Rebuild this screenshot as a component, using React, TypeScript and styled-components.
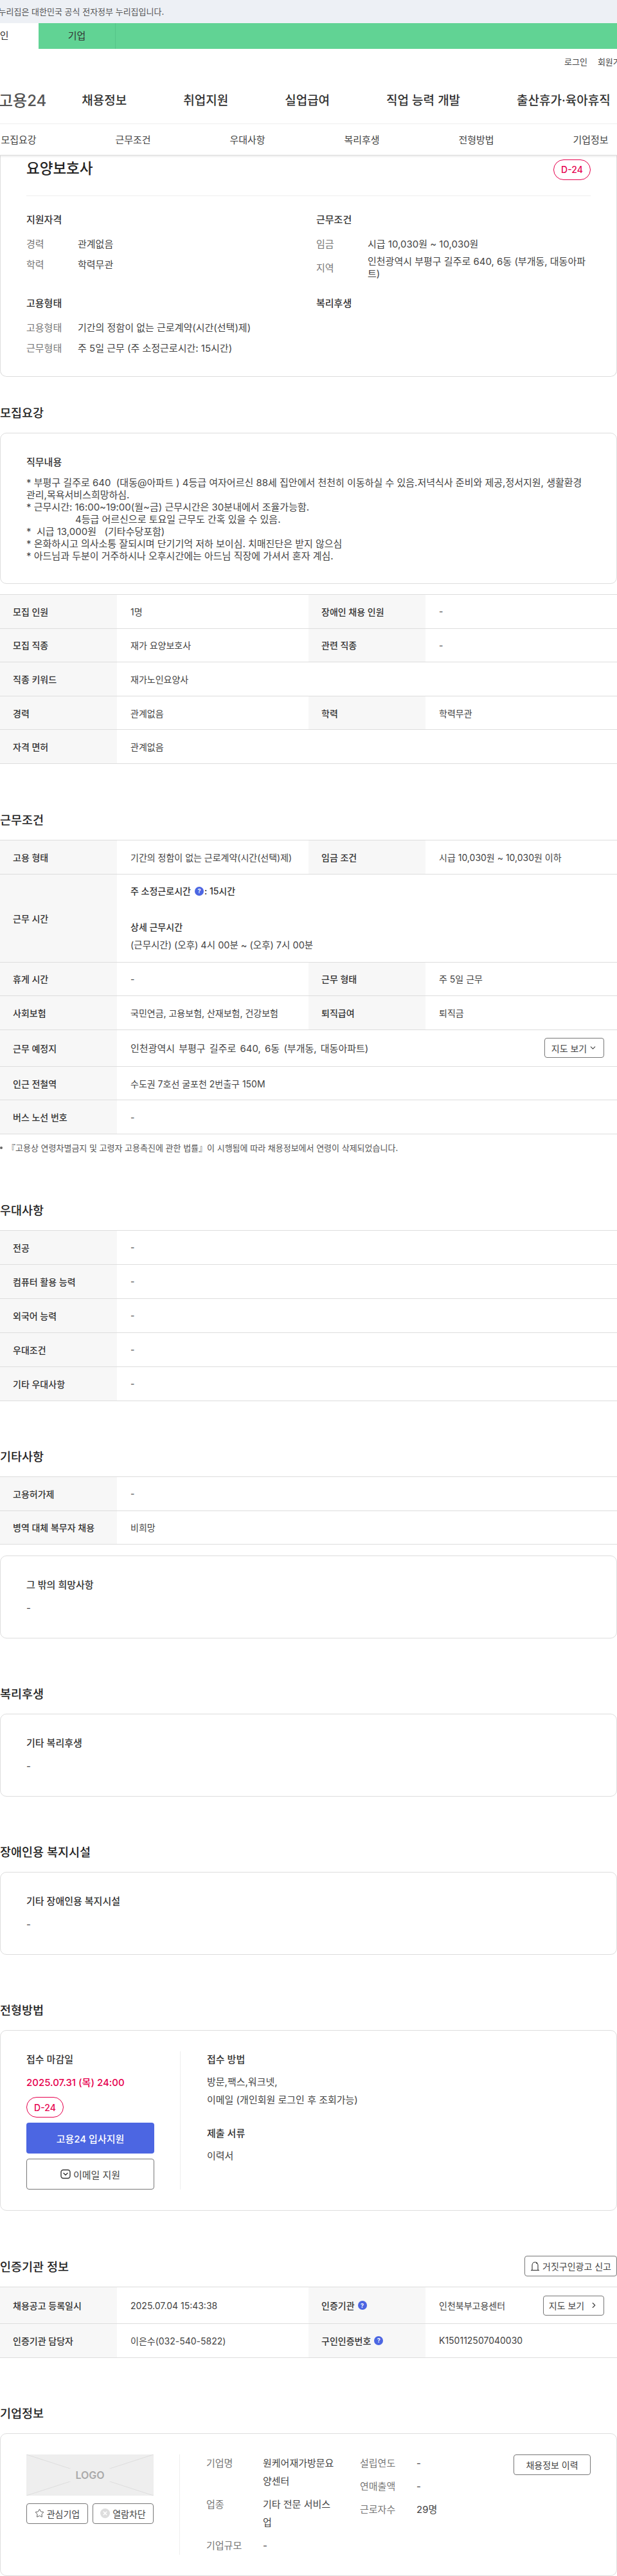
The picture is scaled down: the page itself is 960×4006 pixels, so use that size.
// @ts-nocheck
import React from 'react'
import styled, { createGlobalStyle } from 'styled-components'
import { ChevronDown, ChevronRight, Star } from 'lucide-react'

const GlobalStyle = createGlobalStyle`
  html, body {
    margin: 0;
    padding: 0;
    width: 960px;
    overflow-x: hidden;
    background: #fff;
    color: #444;
    font-family: Inter, "Noto Sans CJK KR", "Noto Sans", sans-serif;
    font-size: 15px;
  }
  * { box-sizing: border-box; }
`

const Page = styled.div`
  width: 960px;
  height: 4006px;
  overflow: hidden;
`

const GovBanner = styled.div`
  height: 36px;
  background: #edf0f5;
  font-size: 13px;
  line-height: 36px;
  color: #555;
  white-space: nowrap;
  text-indent: -18px;
`

const UserTabs = styled.div`
  display: flex;
  height: 40px;
  background: #61d394;
`

const UserTab = styled.div`
  width: ${({ $active }) => ($active ? '60px' : '120px')};
  background: ${({ $active }) => ($active ? '#fff' : 'transparent')};
  border-right: ${({ $active }) => ($active ? 'none' : '1px solid #56c488')};
  text-align: ${({ $active }) => ($active ? 'left' : 'center')};
  text-indent: ${({ $active }) => ($active ? '-14px' : '0')};
  font-size: 15px;
  line-height: 40px;
  color: #333;
  white-space: nowrap;
  overflow: hidden;
`

const UtilBar = styled.div`
  display: flex;
  gap: 16px;
  height: 40px;
  padding-left: 878px;
  font-size: 13px;
  line-height: 40px;
  color: #444;
  white-space: nowrap;
`

const MainNav = styled.nav`
  display: flex;
  align-items: center;
  gap: 88px;
  height: 77px;
  border-bottom: 1px solid #eee;
  white-space: nowrap;
`

const Logo = styled.div`
  margin-left: -2px;
  margin-right: -33px;
  font-size: 24px;
  font-weight: 500;
  color: #555;
`

const NavItem = styled.a`
  font-size: 19px;
  font-weight: 500;
  color: #333;
`

const SubNav = styled.div`
  position: relative;
  z-index: 2;
  display: flex;
  height: 49px;
  margin-left: -60px;
  width: 1068px;
  background: #fff;
`

const SubNavItem = styled.a`
  flex: 0 0 178px;
  text-align: center;
  font-size: 15px;
  line-height: 49px;
  color: #444;
`

const Shadow = styled.div`
  height: 1px;
  margin-top: -1px;
  position: relative;
  z-index: 3;
  background: #ddd;
  box-shadow: 0 1px 3px rgba(0, 0, 0, 0.2);
`

const Card = styled.div`
  border: 1px solid #ddd;
  border-radius: 10px;
  padding: 32px 40px;
`

const SummaryCard = styled(Card)`
  height: 344px;
  border-top: none;
  border-top-left-radius: 0;
  border-top-right-radius: 0;
  padding-top: 6px;
`

const NoticeCard = styled(Card)`
  margin-top: 17px;
`

const SummaryHead = styled.div`
  display: flex;
  justify-content: space-between;
  align-items: center;
  height: 57px;
  padding-bottom: 25px;
  border-bottom: 1px solid #eee;
`

const JobTitle = styled.h1`
  margin: 0;
  font-size: 22.5px;
  line-height: 32px;
  font-weight: 500;
  color: #222;
  position: relative;
  top: -2px;
`

const DayBadge = styled.div`
  display: flex;
  align-items: center;
  justify-content: center;
  width: 58px;
  height: 32px;
  border: 1px solid #e6004d;
  border-radius: 16px;
  color: #e6004d;
  font-size: 14px;
  font-weight: 500;
`

const SummaryGrid = styled.div`
  display: grid;
  grid-template-columns: 431px 1fr;
  column-gap: 20px;
  row-gap: 24px;
  padding-top: 24px;
`

const BlockTitle = styled.div`
  font-size: 15px;
  font-weight: 500;
  line-height: 26px;
  color: #333;
  margin-bottom: 15px;
`

const RowList = styled.div`
  display: flex;
  flex-direction: column;
  gap: ${({ $gap }) => $gap || 13}px;
`

const SummaryRow = styled.div`
  display: flex;
  align-items: center;
  line-height: 19px;
`

const SummaryLabel = styled.div`
  flex: 0 0 80px;
  color: #777;
`

const SummaryValue = styled.div`
  flex: 1;
  color: #444;
`

const Section = styled.section`
  margin-top: ${({ $top }) => $top || 69}px;
`

const SectionHead = styled.div`
  display: flex;
  justify-content: space-between;
  align-items: center;
  height: 32px;
  margin-bottom: 16px;
`

const SectionTitle = styled.h2`
  margin: 0;
  font-size: 18.5px;
  font-weight: 500;
  color: #222;
`

const CardTitle = styled.div`
  font-size: 15px;
  font-weight: 500;
  line-height: 26px;
  color: #333;
`

const CardValue = styled.div`
  margin-top: 10px;
  margin-bottom: 1px;
  line-height: 26px;
  color: #444;
`

const JobText = styled.div`
  margin-top: 9px;
  margin-bottom: 1px;
  font-size: 15px;
  line-height: 19px;
  white-space: pre-wrap;
  word-break: break-all;
  color: #444;
`

const InfoTable = styled.div`
  margin-top: ${({ $top }) => $top || 0}px;
  border-top: 1px solid #ddd;
`

const InfoRow = styled.div`
  display: grid;
  grid-template-columns: 182px 298px 182px 1fr;
  height: ${({ $h }) => $h || 52.6}px;
  border-bottom: 1px solid #ddd;
  font-size: 14px;
`

const Th = styled.div`
  display: flex;
  align-items: center;
  gap: 5px;
  padding-left: 20px;
  background: #f7f7f7;
  font-weight: 500;
  color: #333;
`

const Td = styled.div`
  display: flex;
  align-items: center;
  justify-content: space-between;
  padding: 0 20px 0 21px;
  grid-column: ${({ $wide }) => ($wide ? '2 / -1' : 'auto')};
  color: #444;
  white-space: nowrap;
`

const PlaceCell = styled(Td)`
  font-size: 15px;
  word-spacing: 2px;
`

const HoursCell = styled(Td)`
  display: block;
  padding-top: 12px;
  line-height: 28px;
`

const Strong = styled.div`
  display: flex;
  align-items: center;
  font-weight: 500;
  color: #333;
  min-height: 28px;
  white-space: pre;
`

const HoursText = styled.div`
  font-size: 14.5px;
`

const HelpDot = styled.span`
  display: inline-flex;
  align-items: center;
  justify-content: center;
  width: 14px;
  height: 14px;
  margin: ${({ $inline }) => ($inline ? '0 1px 0 6px' : '0')};
  border-radius: 50%;
  background: #4c66e2;
  color: #fff;
  font-size: 9px;
  font-weight: 700;
`

const Note = styled.div`
  display: flex;
  align-items: center;
  gap: 7px;
  margin-top: 12px;
  font-size: 13px;
  line-height: 18px;
  color: #555;
  &::before {
    content: '';
    width: 4px;
    height: 4px;
    border-radius: 50%;
    background: #666;
  }
`

const OutlineButton = styled.button`
  display: inline-flex;
  align-items: center;
  justify-content: center;
  vertical-align: top;
  gap: ${({ $gap }) => $gap || 4}px;
  width: ${({ $w }) => $w || 'auto'};
  height: ${({ $h }) => $h || 32}px;
  padding: 0;
  border: 1px solid #777;
  border-radius: 4px;
  background: #fff;
  font-family: inherit;
  font-size: ${({ $size }) => $size || 14}px;
  word-spacing: 0;
  color: #444;
  white-space: nowrap;
`

const ApplyLayout = styled.div`
  display: flex;
`

const ApplyLeft = styled.div`
  flex: 0 0 239px;
  padding-right: 40px;
  border-right: 1px solid #eee;
`

const ApplyRight = styled.div`
  padding-left: 41px;
  line-height: 28px;
`

const Deadline = styled.div`
  margin: 10px 0 9px;
  font-size: 15px;
  font-weight: 500;
  line-height: 26px;
  color: #e6004d;
`

const ApplyButton = styled.button`
  display: block;
  width: 199px;
  height: 48px;
  margin: 8px 0;
  border: none;
  border-radius: 4px;
  background: #4c66e2;
  color: #fff;
  font-family: inherit;
  font-size: 15px;
  font-weight: 500;
`

const ApplyText = styled.div`
  margin-top: 8px;
  margin-bottom: ${({ $bottom }) => $bottom || 0}px;
`

const CompanyLayout = styled.div`
  display: flex;
`

const CompanyLeft = styled.div`
  flex: 0 0 239px;
  padding-right: 40px;
  border-right: 1px solid #eee;
`

const LogoBox = styled.div`
  position: relative;
  height: 64px;
  background: #eee;
  display: flex;
  align-items: center;
  justify-content: center;
  font-size: 16px;
  font-weight: 600;
  color: #aaa;
`

const LogoLines = styled.svg`
  position: absolute;
  inset: 0;
  width: 100%;
  height: 100%;
`

const LogoLabel = styled.span`
  position: relative;
  padding: 0 12px;
  background: #eee;
`

const CompanyButtons = styled.div`
  display: flex;
  justify-content: space-between;
  margin-top: 12px;
`

const CompanyInfo = styled.div`
  display: flex;
  flex: 1;
  padding-left: 41px;
  line-height: 28px;
`

const InfoList = styled.dl`
  display: grid;
  grid-template-columns: 88px ${({ $value }) => $value}px;
  row-gap: 8px;
  align-content: start;
  margin: 0 ${({ $right }) => $right || 0}px 0 0;
`

const InfoTerm = styled.dt`
  color: #777;
`

const InfoDesc = styled.dd`
  margin: 0;
  color: #444;
`

const MailIcon = () => (
  <svg width="16" height="16" viewBox="0 0 16 16" fill="none" stroke="#333" strokeWidth="1.4">
    <rect x="1" y="1.5" width="14" height="13" rx="3.5" />
    <path d="M5 6.5 L8 9.5 L11 6.5" strokeLinecap="round" strokeLinejoin="round" />
  </svg>
)

const BellIcon = () => (
  <svg width="15" height="16" viewBox="0 0 15 16" fill="none" stroke="#333" strokeWidth="1.1">
    <path d="M3 14 V6.5 A4.5 4.5 0 0 1 12 6.5 V14" />
    <path d="M1 14.5 H14" />
    <circle cx="10" cy="3.5" r="0.5" fill="#333" />
  </svg>
)

const BlockedIcon = () => (
  <svg width="15" height="15" viewBox="0 0 15 15" fill="none">
    <circle cx="7.5" cy="7.5" r="7.5" fill="#ddd" />
    <path d="M4.8 4.8 L10.2 10.2 M10.2 4.8 L4.8 10.2" stroke="#fff" strokeWidth="1.5" />
  </svg>
)

const jobText = `* 부평구 길주로 640  (대동@아파트 ) 4등급 여자어르신 88세 집안에서 천천히 이동하실 수 있음.저녁식사 준비와 제공,정서지원, 생활환경관리,목욕서비스희망하심.
* 근무시간: 16:00~19:00(월~금) 근무시간은 30분내에서 조율가능함.
                  4등급 어르신으로 토요일 근무도 간혹 있을 수 있음.
*  시급 13,000원   (기타수당포함)
* 온화하시고 의사소통 잘되시며 단기기억 저하 보이심. 치매진단은 받지 않으심
* 아드님과 두분이 거주하시나 오후시간에는 아드님 직장에 가셔서 혼자 계심.`

const navItems = ['채용정보', '취업지원', '실업급여', '직업 능력 개발', '출산휴가·육아휴직']
const subNavItems = ['모집요강', '근무조건', '우대사항', '복리후생', '전형방법', '기업정보']
const preferRows = ['전공', '컴퓨터 활용 능력', '외국어 능력', '우대조건', '기타 우대사항']

const App = () => (
  <Page>
    <GlobalStyle />
    <GovBanner>이 누리집은 대한민국 공식 전자정부 누리집입니다.</GovBanner>
    <UserTabs>
      <UserTab $active>개인</UserTab>
      <UserTab>기업</UserTab>
    </UserTabs>
    <UtilBar>
      <span>로그인</span>
      <span>회원가입</span>
    </UtilBar>
    <MainNav>
      <Logo>고용24</Logo>
      {navItems.map(item => (
        <NavItem key={item}>{item}</NavItem>
      ))}
    </MainNav>
    <SubNav>
      {subNavItems.map(item => (
        <SubNavItem key={item}>{item}</SubNavItem>
      ))}
    </SubNav>
    <Shadow />

    <SummaryCard>
      <SummaryHead>
        <JobTitle>요양보호사</JobTitle>
        <DayBadge>D-24</DayBadge>
      </SummaryHead>
      <SummaryGrid>
        <div>
          <BlockTitle>지원자격</BlockTitle>
          <RowList>
            <SummaryRow>
              <SummaryLabel>경력</SummaryLabel>
              <SummaryValue>관계없음</SummaryValue>
            </SummaryRow>
            <SummaryRow>
              <SummaryLabel>학력</SummaryLabel>
              <SummaryValue>학력무관</SummaryValue>
            </SummaryRow>
          </RowList>
        </div>
        <div>
          <BlockTitle>근무조건</BlockTitle>
          <RowList $gap={8}>
            <SummaryRow>
              <SummaryLabel>임금</SummaryLabel>
              <SummaryValue>시급 10,030원 ~ 10,030원</SummaryValue>
            </SummaryRow>
            <SummaryRow>
              <SummaryLabel>지역</SummaryLabel>
              <SummaryValue>인천광역시 부평구 길주로 640, 6동 (부개동, 대동아파트)</SummaryValue>
            </SummaryRow>
          </RowList>
        </div>
        <div>
          <BlockTitle>고용형태</BlockTitle>
          <RowList>
            <SummaryRow>
              <SummaryLabel>고용형태</SummaryLabel>
              <SummaryValue>기간의 정함이 없는 근로계약(시간(선택)제)</SummaryValue>
            </SummaryRow>
            <SummaryRow>
              <SummaryLabel>근무형태</SummaryLabel>
              <SummaryValue>주 5일 근무 (주 소정근로시간: 15시간)</SummaryValue>
            </SummaryRow>
          </RowList>
        </div>
        <div>
          <BlockTitle>복리후생</BlockTitle>
        </div>
      </SummaryGrid>
    </SummaryCard>

    <Section $top={39}>
      <SectionHead>
        <SectionTitle>모집요강</SectionTitle>
      </SectionHead>
      <Card>
        <CardTitle>직무내용</CardTitle>
        <JobText>{jobText}</JobText>
      </Card>
      <InfoTable $top={16}>
        <InfoRow>
          <Th>모집 인원</Th>
          <Td>1명</Td>
          <Th>장애인 채용 인원</Th>
          <Td>-</Td>
        </InfoRow>
        <InfoRow>
          <Th>모집 직종</Th>
          <Td>재가 요양보호사</Td>
          <Th>관련 직종</Th>
          <Td>-</Td>
        </InfoRow>
        <InfoRow>
          <Th>직종 키워드</Th>
          <Td $wide>재가노인요양사</Td>
        </InfoRow>
        <InfoRow>
          <Th>경력</Th>
          <Td>관계없음</Td>
          <Th>학력</Th>
          <Td>학력무관</Td>
        </InfoRow>
        <InfoRow>
          <Th>자격 면허</Th>
          <Td $wide>관계없음</Td>
        </InfoRow>
      </InfoTable>
    </Section>

    <Section $top={70}>
      <SectionHead>
        <SectionTitle>근무조건</SectionTitle>
      </SectionHead>
      <InfoTable>
        <InfoRow>
          <Th>고용 형태</Th>
          <Td>기간의 정함이 없는 근로계약(시간(선택)제)</Td>
          <Th>임금 조건</Th>
          <Td>시급 10,030원 ~ 10,030원 이하</Td>
        </InfoRow>
        <InfoRow $h={137}>
          <Th>근무 시간</Th>
          <HoursCell $wide>
            <Strong>
              주 소정근로시간<HelpDot $inline>?</HelpDot>: 15시간
            </Strong>
            <br />
            <Strong>상세 근무시간</Strong>
            <HoursText>(근무시간) (오후) 4시 00분 ~ (오후) 7시 00분</HoursText>
          </HoursCell>
        </InfoRow>
        <InfoRow>
          <Th>휴게 시간</Th>
          <Td>-</Td>
          <Th>근무 형태</Th>
          <Td>주 5일 근무</Td>
        </InfoRow>
        <InfoRow>
          <Th>사회보험</Th>
          <Td>국민연금, 고용보험, 산재보험, 건강보험</Td>
          <Th>퇴직급여</Th>
          <Td>퇴직금</Td>
        </InfoRow>
        <InfoRow $h={57}>
          <Th>근무 예정지</Th>
          <PlaceCell $wide>
            인천광역시 부평구 길주로 640, 6동 (부개동, 대동아파트)
            <OutlineButton $w="93px" $h={31} $gap={3}>
              지도 보기 <ChevronDown size={13} />
            </OutlineButton>
          </PlaceCell>
        </InfoRow>
        <InfoRow>
          <Th>인근 전철역</Th>
          <Td $wide>수도권 7호선 굴포천 2번출구 150M</Td>
        </InfoRow>
        <InfoRow>
          <Th>버스 노선 번호</Th>
          <Td $wide>-</Td>
        </InfoRow>
      </InfoTable>
      <Note>『고용상 연령차별금지 및 고령자 고용촉진에 관한 법률』이 시행됨에 따라 채용정보에서 연령이 삭제되었습니다.</Note>
    </Section>

    <Section $top={71}>
      <SectionHead>
        <SectionTitle>우대사항</SectionTitle>
      </SectionHead>
      <InfoTable>
        {preferRows.map(row => (
          <InfoRow key={row} $h={53}>
            <Th>{row}</Th>
            <Td $wide>-</Td>
          </InfoRow>
        ))}
      </InfoTable>
    </Section>

    <Section>
      <SectionHead>
        <SectionTitle>기타사항</SectionTitle>
      </SectionHead>
      <InfoTable>
        <InfoRow>
          <Th>고용허가제</Th>
          <Td $wide>-</Td>
        </InfoRow>
        <InfoRow>
          <Th>병역 대체 복무자 채용</Th>
          <Td $wide>비희망</Td>
        </InfoRow>
      </InfoTable>
      <NoticeCard>
        <CardTitle>그 밖의 희망사항</CardTitle>
        <CardValue>-</CardValue>
      </NoticeCard>
    </Section>

    <Section>
      <SectionHead>
        <SectionTitle>복리후생</SectionTitle>
      </SectionHead>
      <Card>
        <CardTitle>기타 복리후생</CardTitle>
        <CardValue>-</CardValue>
      </Card>
    </Section>

    <Section>
      <SectionHead>
        <SectionTitle>장애인용 복지시설</SectionTitle>
      </SectionHead>
      <Card>
        <CardTitle>기타 장애인용 복지시설</CardTitle>
        <CardValue>-</CardValue>
      </Card>
    </Section>

    <Section>
      <SectionHead>
        <SectionTitle>전형방법</SectionTitle>
      </SectionHead>
      <Card>
        <ApplyLayout>
          <ApplyLeft>
            <CardTitle>접수 마감일</CardTitle>
            <Deadline>2025.07.31 (목) 24:00</Deadline>
            <DayBadge>D-24</DayBadge>
            <ApplyButton>고용24 입사지원</ApplyButton>
            <OutlineButton $w="199px" $h={48} $size={15}>
              <MailIcon />
              이메일 지원
            </OutlineButton>
          </ApplyLeft>
          <ApplyRight>
            <CardTitle>접수 방법</CardTitle>
            <ApplyText $bottom={25}>
              방문,팩스,워크넷,
              <br />
              이메일 (개인회원 로그인 후 조회가능)
            </ApplyText>
            <CardTitle>제출 서류</CardTitle>
            <ApplyText>이력서</ApplyText>
          </ApplyRight>
        </ApplyLayout>
      </Card>
    </Section>

    <Section $top={70}>
      <SectionHead>
        <SectionTitle>인증기관 정보</SectionTitle>
        <OutlineButton $w="144px">
          <BellIcon />
          거짓구인광고 신고
        </OutlineButton>
      </SectionHead>
      <InfoTable>
        <InfoRow $h={57}>
          <Th>채용공고 등록일시</Th>
          <Td>2025.07.04 15:43:38</Td>
          <Th>
            인증기관 <HelpDot>?</HelpDot>
          </Th>
          <Td>
            인천북부고용센터
            <OutlineButton $w="95px" $h={31} $gap={8}>
              지도 보기 <ChevronRight size={14} />
            </OutlineButton>
          </Td>
        </InfoRow>
        <InfoRow>
          <Th>인증기관 담당자</Th>
          <Td>이은수(032-540-5822)</Td>
          <Th>
            구인인증번호 <HelpDot>?</HelpDot>
          </Th>
          <Td>K150112507040030</Td>
        </InfoRow>
      </InfoTable>
    </Section>

    <Section>
      <SectionHead>
        <SectionTitle>기업정보</SectionTitle>
      </SectionHead>
      <Card>
        <CompanyLayout>
          <CompanyLeft>
            <LogoBox>
              <LogoLines viewBox="0 0 199 64" preserveAspectRatio="none">
                <path d="M0 0 L199 64 M199 0 L0 64" stroke="#ddd" strokeWidth="1" />
              </LogoLines>
              <LogoLabel>LOGO</LogoLabel>
            </LogoBox>
            <CompanyButtons>
              <OutlineButton $w="96px">
                <Star size={15} strokeWidth={1.3} color="#333" />
                관심기업
              </OutlineButton>
              <OutlineButton $w="95px">
                <BlockedIcon />
                열람차단
              </OutlineButton>
            </CompanyButtons>
          </CompanyLeft>
          <CompanyInfo>
            <InfoList $value={116} $right={35}>
              <InfoTerm>기업명</InfoTerm>
              <InfoDesc>원케어재가방문요양센터</InfoDesc>
              <InfoTerm>업종</InfoTerm>
              <InfoDesc>기타 전문 서비스업</InfoDesc>
              <InfoTerm>기업규모</InfoTerm>
              <InfoDesc>-</InfoDesc>
            </InfoList>
            <InfoList $value={151}>
              <InfoTerm>설립연도</InfoTerm>
              <InfoDesc>-</InfoDesc>
              <InfoTerm>연매출액</InfoTerm>
              <InfoDesc>-</InfoDesc>
              <InfoTerm>근로자수</InfoTerm>
              <InfoDesc>29명</InfoDesc>
            </InfoList>
            <OutlineButton $w="120px">채용정보 이력</OutlineButton>
          </CompanyInfo>
        </CompanyLayout>
      </Card>
    </Section>
  </Page>
)

export default App
